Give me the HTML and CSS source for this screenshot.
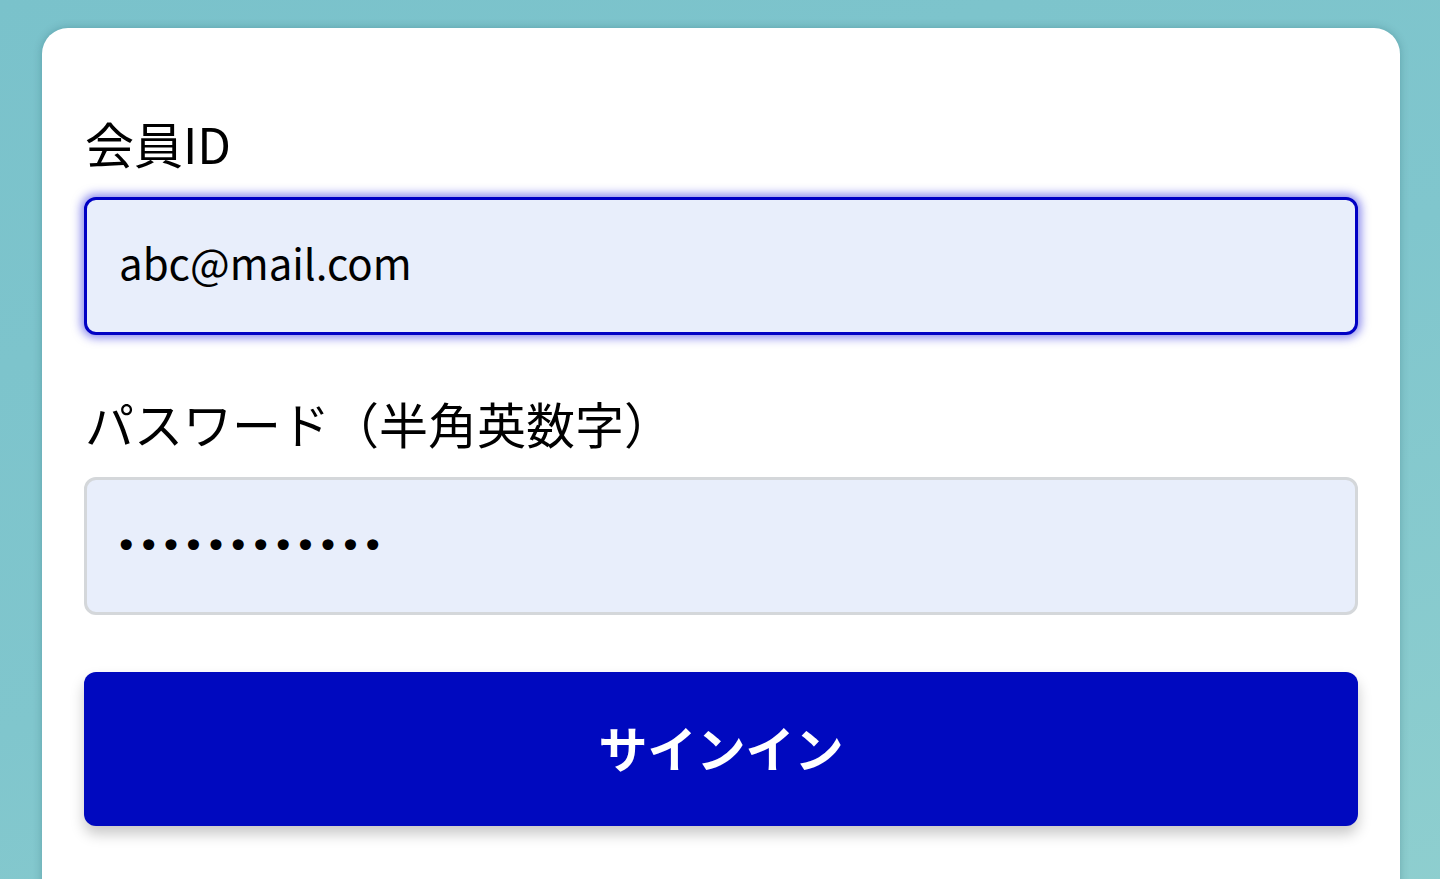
FILE: index.html
```html
<!DOCTYPE html>
<html lang="ja">
<head>
  <meta charset="UTF-8">
  <meta name="viewport" content="width=device-width, initial-scale=1.0">
  <title>サインイン</title>
  <link rel="stylesheet" href="styles.css">
</head>
<body>
  <div class="card">
    <form class="signin" onsubmit="return false;">
      <div class="field">
        <label class="label" for="member-id">会員ID</label>
        <input class="input input-focus" id="member-id" type="text" value="abc@mail.com">
      </div>

      <div class="field">
        <label class="label" for="password">パスワード（半角英数字）</label>
        <input class="input" id="password" type="password" value="abcdef123456">
      </div>

      <button class="btn" type="submit">サインイン</button>
    </form>
  </div>
</body>
</html>
```

FILE: styles.css
```css
* {
  margin: 0;
  padding: 0;
  box-sizing: border-box;
}

body {
  font-family: "Noto Sans CJK JP", "Noto Sans", sans-serif;
  background: linear-gradient(160deg, #7ac2cb 0%, #80c6cd 50%, #8fcfcf 100%);
  min-height: 100vh;
  color: #000;
  padding: 28px 40px 0 42px;
  overflow: hidden;
}

.card {
  background: #fff;
  border-radius: 26px;
  box-shadow: 0 0 8px rgba(0, 60, 70, 0.25);
  padding: 80px 42px 120px;
  min-height: 900px;
}

.signin {
  display: flex;
  flex-direction: column;
}

.field {
  display: flex;
  flex-direction: column;
  margin-bottom: 53px;
}

.field:last-of-type {
  margin-bottom: 57px;
}

.label {
  font-size: 49px;
  line-height: 70px;
  margin-bottom: 19px;
  padding-left: 1px;
}

.input {
  height: 138px;
  background: #e8eefb;
  border: 3px solid #d4d7da;
  border-radius: 12px;
  padding: 0 32px 10px;
  font-family: "Noto Sans CJK JP", "Noto Sans", sans-serif;
  font-size: 42px;
  color: #000;
  outline: none;
}

.input[type="password"] {
  font-family: "DejaVu Sans", sans-serif;
  font-size: 38px;
  padding: 0 28px;
}

.input-focus {
  border-color: #0000c4;
  box-shadow: 0 0 10px 3px rgba(20, 20, 220, 0.5);
}

.btn {
  height: 154px;
  background: #0009bf;
  color: #fff;
  border: none;
  border-radius: 12px;
  padding-bottom: 6px;
  font-family: "Noto Sans CJK JP", "Noto Sans", sans-serif;
  font-size: 49px;
  font-weight: 700;
  box-shadow: 0 8px 14px rgba(0, 0, 0, 0.22);
  cursor: pointer;
}
```
